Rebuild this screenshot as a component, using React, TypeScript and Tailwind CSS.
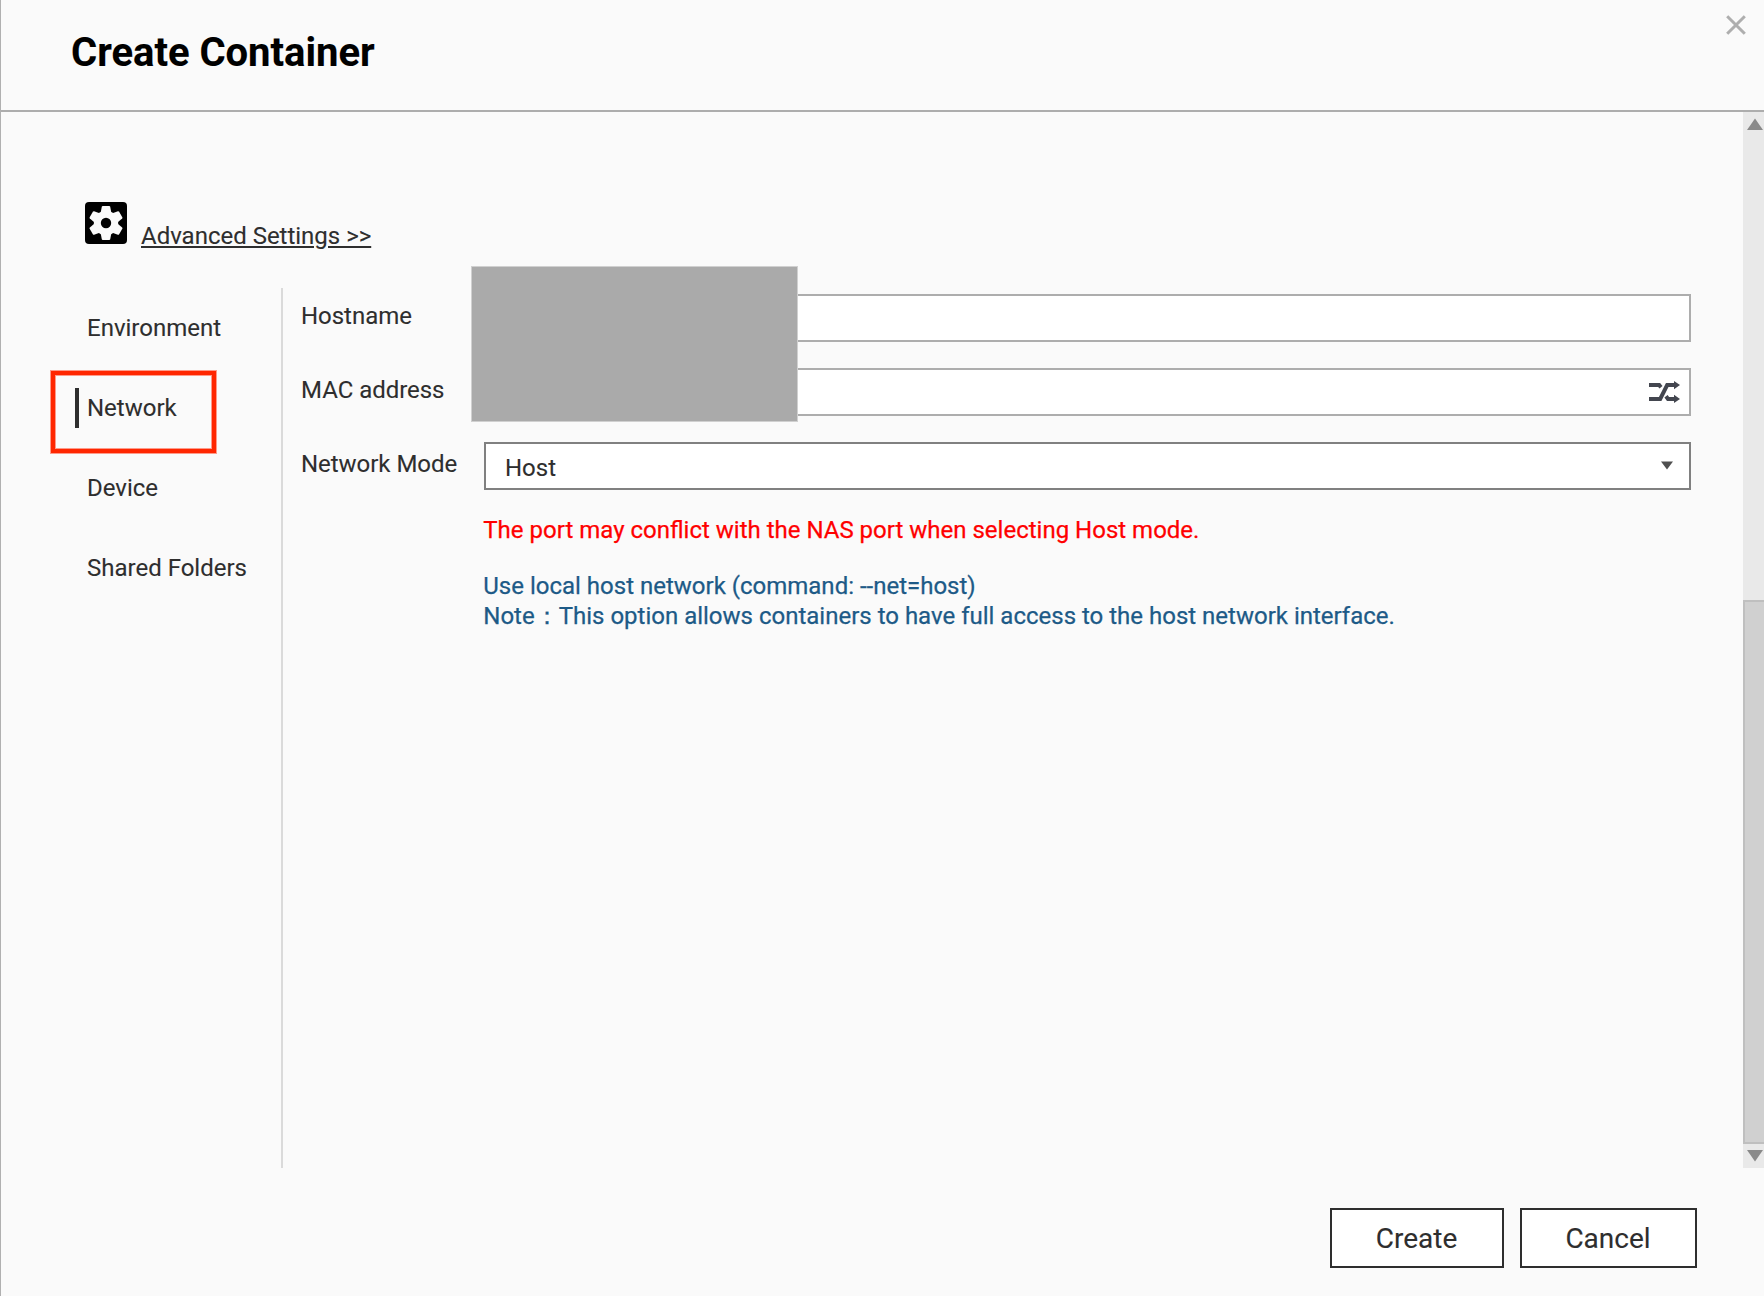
const navItems = ["Environment", "Network", "Device", "Shared Folders"];

function GearIcon() {
  return (
    <svg width="42" height="42" viewBox="0 0 42 42" className="block">
      <rect width="42" height="42" rx="4" fill="#000" />
      <g transform="translate(21 21)" fill="#fafafa">
        <circle r="12.2" />
        {[0, 60, 120, 180, 240, 300].map((a) => (
          <path key={a} d="M-5.6 -9 L-4.2 -16.2 Q-4 -17 -3.2 -17 H3.2 Q4 -17 4.2 -16.2 L5.6 -9 Z" transform={`rotate(${a})`} />
        ))}
        <circle r="5.2" fill="#000" />
      </g>
    </svg>
  );
}

function ShuffleIcon() {
  return (
    <svg width="31" height="22" viewBox="0 0 31 22" fill="none" stroke="#43464f" strokeWidth="4">
      <path d="M0 4.1 H10.2 L12 6.2" />
      <path d="M0 17.9 H11.2 L18.2 4.1 H26" />
      <path d="M17 15.2 L19 17.9 H26" />
      <path d="M25 0 L31 4.1 L25 8.2 Z M25 13.8 L31 17.9 L25 22 Z" fill="#43464f" stroke="none" />
    </svg>
  );
}

export default function App() {
  return (
    <div className="flex h-[1296px] w-[1764px] flex-col overflow-hidden border-l border-[#b0b0b0] bg-[#fafafa] font-['Roboto',sans-serif] text-[24px] leading-[30px] text-[#2e2e2e] [-webkit-text-stroke:0.1px]">
      <header className="flex h-28 shrink-0 justify-between border-b-2 border-[#adadad] pl-[70px] pr-[18px]">
        <h1 className="mt-[29px] text-[40px] font-bold leading-[48px] tracking-[-0.02px] text-black">Create Container</h1>
        <button aria-label="Close" className="mt-[15px] h-5 w-5">
          <svg width="20" height="20" viewBox="0 0 20 20" stroke="#aeaeae" strokeWidth="3">
            <path d="M1.2 1.2 L18.8 18.8 M18.8 1.2 L1.2 18.8" />
          </svg>
        </button>
      </header>

      <div className="flex h-[1056px] shrink-0">
        <main className="flex w-[1742px] flex-col pl-[74px] pr-[52px]">
          <div className="flex h-[176px] shrink-0 items-start pl-[10px] pt-[90px]">
            <GearIcon />
            <a className="ml-[14px] mt-[19px] tracking-[-0.01px] underline decoration-[#2e2e2e] decoration-[1.5px] underline-offset-[2px]">Advanced Settings &gt;&gt;</a>
          </div>

          <div className="flex grow">
            <nav className="flex w-[208px] shrink-0 flex-col gap-10 border-r-2 border-[#dadada] pt-5">
              {navItems.map((item) =>
                item === "Network" ? (
                  <div key={item} className="relative flex h-10 items-center border-l-4 border-[#2e2e2e] pl-2">
                    {item}
                    <span className="absolute -left-[28px] -top-[17px] h-[82px] w-[165px] border-4 border-[#ff2600] shadow-[0_0_0_1px_#fd9a8a,inset_0_0_0_1px_#fd9a8a]" />
                  </div>
                ) : (
                  <div key={item} className="flex h-10 items-center border-l-4 border-transparent pl-2">
                    {item}
                  </div>
                ),
              )}
            </nav>

            <section className="flex grow flex-col pl-[18px] pt-1.5">
              <div className="relative flex flex-col gap-[26px]">
                <div className="flex h-12">
                  <label className="w-[183px] shrink-0 pt-[7px] tracking-[-0.03px]">Hostname</label>
                  <div className="grow border-2 border-[#adadad] bg-white" />
                </div>
                <div className="flex h-12">
                  <label className="w-[183px] shrink-0 pt-[7px] tracking-[-0.03px]">MAC address</label>
                  <div className="flex grow items-center justify-end border-2 border-[#adadad] bg-white pr-[9px]">
                    <ShuffleIcon />
                  </div>
                </div>
                <div className="flex h-12">
                  <label className="w-[183px] shrink-0 pt-[7px] tracking-[-0.03px]">Network Mode</label>
                  <div className="flex grow justify-between border-2 border-[#808080] bg-white pl-[19px] pr-[16px] pt-[9px]">
                    <span>Host</span>
                    <svg width="12" height="9" viewBox="0 0 12 9" className="mt-2">
                      <path d="M0 0.5 H12 L6 8.5 Z" fill="#505050" />
                    </svg>
                  </div>
                </div>
                <div className="absolute -top-[28px] left-[170px] h-[156px] w-[327px] border border-[#d0d0d0] bg-[#aaaaaa]" />
              </div>

              <div className="pl-[182.3px] [-webkit-text-stroke:0.25px]">
                <p className="mt-[25px] text-[#ff0000]">The port may conflict with the NAS port when selecting Host mode.</p>
                <p className="mt-[26px] text-[#1d5a87]">Use local host network (command: --net=host)</p>
                <p className="text-[#1d5a87]">Note：This option allows containers to have full access to the host network interface.</p>
              </div>
            </section>
          </div>
        </main>

        <aside className="flex w-[21px] flex-col bg-[#e9e9e9]">
          <svg width="21" height="24" viewBox="0 0 21 24" className="shrink-0">
            <path d="M4 18 L12 6.5 L20 18 Z" fill="#8a8a8a" />
          </svg>
          <div className="mt-[464px] h-[544px] shrink-0 border-y-2 border-l-2 border-[#bfbfbf] bg-[#d0d0d0]" />
          <svg width="21" height="24" viewBox="0 0 21 24" className="shrink-0">
            <path d="M4 6 L12 17.5 L20 6 Z" fill="#8a8a8a" />
          </svg>
        </aside>
      </div>

      <footer className="flex justify-end gap-4 pr-[67px] pt-10 text-[28px]">
        <button className="h-[60px] w-[174px] border-2 border-[#2e2e2e] bg-white pr-px pt-0.5">Create</button>
        <button className="h-[60px] w-[177px] border-2 border-[#2e2e2e] bg-white pr-px pt-0.5">Cancel</button>
      </footer>
    </div>
  );
}
